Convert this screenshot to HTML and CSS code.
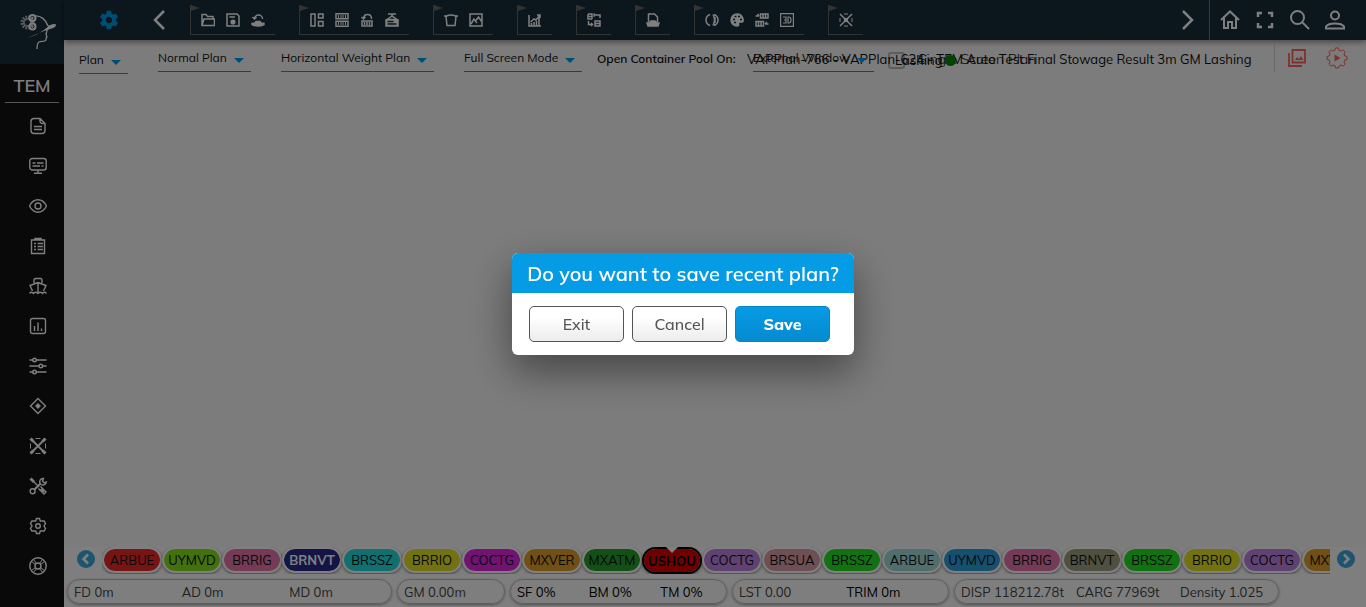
FILE: index.html
```html
<!DOCTYPE html>
<html lang="en">
<head>
<meta charset="utf-8">
<meta name="viewport" content="width=device-width, initial-scale=1">
<title>Stowage plan</title>
<link rel="stylesheet" href="styles.css">
</head>
<body>
<div class="app">
  <aside class="sidebar">
    <a class="logo" href="#" aria-label="Home">
      <svg viewBox="0 0 40 40" width="40" height="40" fill="none" stroke="currentColor">
        <circle cx="13.500" cy="12.500" r="5.500" stroke-width="3" stroke-dasharray="1.800 1.100" opacity=".65"/>
        <circle cx="13.500" cy="12.500" r="3.500" stroke-width="2" opacity=".55"/>
        <circle cx="18.500" cy="8" r="3" stroke-width="2"/>
        <circle cx="18.500" cy="8" r=".8"/>
        <circle cx="18.500" cy="16.500" r="3" stroke-width="2"/>
        <circle cx="18.500" cy="16.500" r=".8"/>
        <path d="M20 6c7-1 12 4 14 10" stroke-width="1.300"/>
        <path d="M13 28c8-2 16-7 22-12 2-2 7-3 7-1 0 3-7 4-12 6-6 2-11 5-17 7z" fill="currentColor" stroke="none"/>
        <path d="M33 21l-1 3 1 3-1 1v2c-1 2-4 1-7 2-2 1-2 4-2 7M35 15c0 3-1 5-3 6" stroke-width="1.300"/>
      </svg>
    </a>
    <div class="brand">TEM</div>
    <nav class="side-nav" aria-label="Modules">
      <a href="#" aria-label="Documents"><svg class="icon" viewBox="0 0 18 18"><path d="M11 1.500H5a3 3 0 0 0-3 3v9a3 3 0 0 0 3 3h8a3 3 0 0 0 3-3v-7zM11 1.500V4a2.500 2.500 0 0 0 2.500 2.500H16M5 9.500h8M5 12.500h8"/></svg></a>
      <a href="#" aria-label="Monitor"><svg class="icon" viewBox="0 0 18 18"><rect x=".8" y="1.500" width="16.400" height="11.500" rx="2.500"/><path d="M3.500 6H6.500M8 6h6.500M3.500 9H11M12.500 9h2M9 13v3M5 16.300h8"/></svg></a>
      <a href="#" aria-label="View"><svg class="icon" viewBox="0 0 18 18"><path d="M.5 9C2.500 5 5.800 2.800 9 2.800S15.500 5 17.500 9C15.500 13 12.200 15.200 9 15.200S2.500 13 .5 9z"/><circle cx="9" cy="9" r="3"/></svg></a>
      <a href="#" aria-label="Checklist"><svg class="icon" viewBox="0 0 18 18"><path d="M2.500 3h13v13.500h-13zM6 3V1.500h6V3M5 6.500h2M8.500 6.500H14M5 9.500h2M8.500 9.500H14M5 12.500h2M8.500 12.500H14"/></svg></a>
      <a href="#" aria-label="Vessel"><svg class="icon" viewBox="0 0 18 18"><path d="M5 6V3.500Q5 1.500 6.500 1.500h5Q13 1.500 13 3.500V6M3.500 14L1 8.500Q4 7.500 9 5.500q5 2 8 3L14.500 14M9 5.500V15M.5 16.500q2-2.500 4 0 2-2.500 4.500 0 2.500-2.500 4.500 0 2-2.500 4 0"/></svg></a>
      <a href="#" aria-label="Statistics"><svg class="icon" viewBox="0 0 18 18"><rect x="1.500" y="1.500" width="15" height="15" rx="2"/><path d="M5.500 9v5M9 5.500V14M12.500 11.500V14"/></svg></a>
      <a href="#" aria-label="Filters"><svg class="icon" viewBox="0 0 18 18"><path d="M.5 3h4M7 3h10.500M.5 9H10M13.500 9h4M.5 15h4M7 15h10.500"/><circle cx="5.500" cy="3" r="1.800"/><circle cx="11.800" cy="9" r="1.800"/><circle cx="5.500" cy="15" r="1.800"/></svg></a>
      <a href="#" aria-label="Dangerous goods"><svg class="icon" viewBox="0 0 18 18"><path d="M9 1.500L16.500 9 9 16.500 1.500 9z"/><path class="solid" d="M9 7L11 9 9 11 7 9z"/></svg></a>
      <a href="#" aria-label="Lashing"><svg class="icon" viewBox="0 0 18 18"><path stroke-width="1.800" d="M2 2l14 14M16 2L2 16"/><path stroke-width="1" d="M6.500 1.500h5M6.500 16.500h5M1.500 6.500v5M16.500 6.500v5"/><path stroke-width="3" d="M1.500 1.500L4.500 4.500M16.500 1.500L13.500 4.500M1.500 16.500L4.500 13.500M16.500 16.500L13.500 13.500"/></svg></a>
      <a href="#" aria-label="Tools"><svg class="icon" viewBox="0 0 18 18"><path stroke-width="2.800" d="M1.500 1.500L5 5"/><path d="M4 4l6 6M11.500 9.500l5.500 5.500-2 2-5.500-5.500M12 12l3 3"/><path stroke-width="2" d="M5.500 12.500l6-6"/><path d="M14.500 1.500a3.300 3.300 0 1 0 2.800 3.500l-2.300.8-1.500-1.500z"/><circle cx="3.600" cy="14.300" r="2.500"/></svg></a>
      <a href="#" aria-label="Settings"><svg class="icon" viewBox="0 0 18 18"><path d="M7.500 1.500h3L11.300 4l2.200 0 1.600 0L16.500 6.500 15 9l1.500 2.500-1.400 2.500h-3.800l-.8 2.500h-3L6.700 14H2.900l-1.400-2.500L3 9 1.500 6.500 2.900 4h3.800z"/><circle cx="9" cy="9" r="2.300"/></svg></a>
      <a href="#" aria-label="Help"><svg class="icon" viewBox="0 0 18 18"><circle cx="9" cy="9" r="8.200"/><circle cx="9" cy="9" r="3"/><path d="M2.500 4.500l4 3M4.500 2.500l3 4M13.500 2.500l-3 4M15.500 4.500l-4 3M2.500 13.500l4-3M4.500 15.500l3-4M13.500 15.500l-3-4M15.500 13.500l-4-3" stroke-width="1"/></svg></a>
    </nav>
  </aside>

  <div class="workspace">
    <header class="topbar">
      <button class="bar-btn settings" type="button" aria-label="Settings"><svg class="fill" width="24" height="24" viewBox="0 0 24 24"><path d="M19.430 12.980c.04-.32.070-.64.070-.98s-.03-.66-.07-.98l2.110-1.650c.19-.15.240-.42.120-.64l-2-3.460c-.12-.22-.39-.3-.61-.22l-2.490 1c-.52-.4-1.080-.73-1.690-.98l-.38-2.650C14.460 2.180 14.250 2 14 2h-4c-.25 0-.46.180-.49.420l-.38 2.650c-.61.250-1.170.59-1.690.98l-2.490-1c-.23-.09-.49 0-.61.220l-2 3.460c-.13.220-.07.490.12.640l2.110 1.650c-.04.320-.07.650-.07.980s.03.660.070.980l-2.110 1.650c-.19.150-.24.420-.12.640l2 3.460c.12.220.39.300.61.220l2.490-1c.52.400 1.080.730 1.690.980l.38 2.650c.03.240.24.420.49.420h4c.25 0 .46-.18.490-.42l.38-2.650c.61-.25 1.170-.59 1.690-.98l2.490 1c.23.090.49 0 .61-.22l2-3.460c.12-.22.070-.49-.12-.64l-2.110-1.650zM12 15.500c-1.930 0-3.500-1.570-3.500-3.500s1.570-3.500 3.500-3.500 3.500 1.570 3.500 3.500-1.570 3.500-3.500 3.500z"/></svg></button>
      <button class="bar-btn prev" type="button" aria-label="Previous tools"><svg class="line" width="14" height="22" viewBox="0 0 14 22"><path d="M12 2L3 11l9 9"/></svg></button>
      <div class="tool-groups">
        <div class="group">
          <button type="button" aria-label="Open"><svg class="tool" viewBox="0 0 14 14"><path d="M1 12.500v-11h4l1.500 2H12v2M1 12.500L3 6h10.500v6.500z"/></svg></button>
          <button type="button" aria-label="Save"><svg class="tool" viewBox="0 0 14 14"><path d="M1 1h10l2 2v10H1zM3.500 4H9"/><circle class="solid" cx="7" cy="9" r="1.800"/></svg></button>
          <button type="button" aria-label="Restore"><svg class="tool" viewBox="0 0 14 14"><path d="M3.500 6a4 4 0 1 1 8 0M1.500 4l2 2 2-2"/><path class="solid" d="M1 10.500l3-.5 1-1.500h4l1 1.500 3 .5v1q-6 3-12 0z"/></svg></button>
        </div>
        <div class="group">
          <button type="button" aria-label="Layout"><svg class="tool" viewBox="0 0 14 14"><path d="M1 1h4v12H1zM8.500 1H13v4H8.500zM8.500 8.500H13V13H8.500z"/></svg></button>
          <button type="button" aria-label="Bays"><svg class="tool" viewBox="0 0 14 14"><path d="M1 0.800h12v5H1zM1 8.300h12v5H1z"/><path stroke-width="1" d="M3.500 2v3M6 2v3M8 2v3M10.500 2v3M3.500 9v3M6 9v3M8 9v3M10.500 9v3"/></svg></button>
          <button type="button" aria-label="Reload containers"><svg class="tool" viewBox="0 0 14 14"><path d="M2 8h10v5H2zM4.500 9v3M7 9v3M9.500 9v3M3.500 6q0-4.500 4-4.500t4 4.500M1.500 4l2 2 2-2"/></svg></button>
          <button type="button" aria-label="Crane"><svg class="tool" viewBox="0 0 14 14"><path d="M3 1h8M7 1v2M7 3L2 6.500h10z"/><path class="solid" d="M1 7h12v6H1z"/><path class="cut" d="M2.500 8.500h6M2.500 11h9"/></svg></button>
        </div>
        <div class="group">
          <button type="button" aria-label="Tank"><svg class="tool" viewBox="0 0 14 14"><path d="M0 3h2.500Q7 1 11.500 3H14M2 3.500L3 12.500h8l1-9"/></svg></button>
          <button type="button" aria-label="Graph"><svg class="tool" viewBox="0 0 14 14"><path d="M1 1h12v12H1zM2 11l3-5 3 4M6.500 8l3-4L13 9"/></svg></button>
        </div>
        <div class="group">
          <button type="button" aria-label="Chart"><svg class="tool" viewBox="0 0 14 14"><path d="M1 2v11h12M3.500 13v-3M6 13V9M8.500 13V8M11 13V5M2.500 9L6 6l2 1 4-5M9 2h3v3"/></svg></button>
        </div>
        <div class="group">
          <button type="button" aria-label="Swap"><svg class="tool" viewBox="0 0 14 14"><path d="M1 1v5h4M1 3.500h4M1 1h4v5M8 2h5v3M6.500 3.500L8 2 6.500.5M8 8h5v5H8zM8 10.500h5M5.500 11.500H1.500V8M4 10l1.500 1.500L4 13"/></svg></button>
        </div>
        <div class="group">
          <button type="button" aria-label="Report"><svg class="tool" viewBox="0 0 14 14"><path d="M2.500 9V1h6l3 3v5"/><path class="solid" d="M1 10h2l2-2h4L11 10h2l-1 3H2z"/></svg></button>
        </div>
        <div class="group">
          <button type="button" aria-label="Contrast"><svg class="tool" viewBox="0 0 14 14"><path d="M5 1.500Q1 3 1 7t4 5.500"/><path d="M9 1.500q4 1.500 4 5.500t-4 5.500M8 1.500q3 5.500 0 11M10 4v6"/></svg></button>
          <button type="button" aria-label="Palette"><svg class="tool" viewBox="0 0 14 14"><path class="solid" d="M7 1a6 6 0 1 0 0 12q2 0 1.500-2T10 9h2q1.500 0 1-3Q12 1 7 1z"/><path class="cut" d="M3 6.500h2M4.500 3.500h2M8 3.500h2M10 6.500h2M4 9.500h2"/></svg></button>
          <button type="button" aria-label="Move containers"><svg class="tool" viewBox="0 0 14 14"><path d="M5.500 1H13v4H5.500zM8 1v4M10.500 1v4M1 8.500h7.500v4.500H1zM3.500 8.500V13M6 8.500V13M.5 3h3.500M2.500 1L4 3M13.500 11H10M12 9l-2 2"/></svg></button>
          <button type="button" aria-label="3D view"><svg class="tool fine" viewBox="0 0 14 14"><path d="M.6.600h12.800v12.800H.6zM3 4h3v6H3M4 7h2M8 4h1q2 0 2 3t-2 3H8z"/></svg></button>
        </div>
        <div class="group">
          <button type="button" aria-label="Lashing view"><svg class="tool" viewBox="0 0 14 14"><path d="M1 1l12 12M13 1L1 13"/><path stroke-width="1" d="M5 1h4M5 13h4M1 5v4M13 5v4"/><circle class="solid" cx="7" cy="7" r="1.500"/></svg></button>
        </div>
      </div>
      <button class="bar-btn next" type="button" aria-label="Next tools"><svg class="line" width="14" height="22" viewBox="0 0 14 22"><path d="M2 2l9 9-9 9"/></svg></button>
      <div class="user-tools">
        <button class="bar-btn" type="button" aria-label="Home"><svg class="line thin" width="22" height="22" viewBox="0 0 22 22"><path d="M2 11l9-8.500L20 11M5 9v10h4v-6h4v6h4V9"/></svg></button>
        <button class="bar-btn" type="button" aria-label="Full screen"><svg class="line" width="18" height="18" viewBox="0 0 18 18"><path d="M2 6V2h4M12 2h4v4M16 12v4h-4M6 16H2v-4"/></svg></button>
        <button class="bar-btn" type="button" aria-label="Search"><svg class="line thin" width="22" height="22" viewBox="0 0 22 22"><circle cx="8.500" cy="8.500" r="6.500"/><path d="M13.500 13.500L20 20"/></svg></button>
        <button class="bar-btn" type="button" aria-label="Account"><svg class="line thin" width="22" height="22" viewBox="0 0 22 22"><circle cx="11" cy="6.500" r="4"/><path d="M2 19.500v-2q2-3 9-3t9 3v2z"/></svg></button>
      </div>
    </header>

    <div class="subbar">
      <label class="pick plan"><select aria-label="Plan"><option>Plan</option></select></label>
      <label class="pick normal"><select aria-label="Plan type"><option>Normal Plan</option></select></label>
      <label class="pick weight"><select aria-label="Plan view"><option>Horizontal Weight Plan</option></select></label>
      <label class="pick mode"><select aria-label="Screen mode"><option>Full Screen Mode</option></select></label>
      <span class="pool">Open Container Pool On:</span>
      <div class="overlap">
        <div class="view-options">
          <label class="pick window"><select aria-label="Window"><option>External Window</option></select></label>
          <label class="check"><input type="checkbox"><span>Lashing</span></label>
          <span class="screen-plan">Single Screen Plan</span>
        </div>
        <h1 class="plan-title">VAPPlan-766 - VAPPlan-624 - TEM Auto Test Final Stowage Result 3m GM Lashing</h1>
        <span class="dot"></span>
      </div>
      <div class="actions">
        <button class="bar-btn" type="button" aria-label="Gallery"><svg width="18" height="18" viewBox="0 0 18 18"><path d="M4.500 1H17v12.500H4.500zM1 4v13h13"/><path class="solid" d="M7 11l2-3 2 2 2-3 2.500 4z"/></svg></button>
        <button class="bar-btn" type="button" aria-label="Run"><svg width="22" height="22" viewBox="0 0 22 22"><path stroke-width="1" d="M9.500 1h3l.6 2.200 2 .8 2-1.200L19.200 5 18 7l.8 2 2.200.5v3l-2.200.5-.8 2 1.200 2-2.100 2.200-2-1.200-2 .8-.6 2.200h-3L9 18.800 7 18l-2 1.200L2.800 17 4 15l-.8-2-2.200-.5v-3L3.200 9 4 7 2.800 5 5 2.800 7 4l2-.8z"/><path class="solid" d="M8.500 7.500l6 3.500-6 3.500z"/></svg></button>
      </div>
    </div>

    <main class="canvas"></main>

    <footer class="footer">
      <div class="ports">
        <button class="round" type="button" aria-label="Previous ports"><svg viewBox="0 0 18 18" width="18" height="18"><circle cx="9" cy="9" r="9"/><path d="M11 4.500L6.500 9l4.500 4.500"/></svg></button>
        <div class="port-list">
          <button type="button" class="port red">ARBUE</button>
          <button type="button" class="port lime">UYMVD</button>
          <button type="button" class="port pink">BRRIG</button>
          <button type="button" class="port navy">BRNVT</button>
          <button type="button" class="port cyan">BRSSZ</button>
          <button type="button" class="port yellow">BRRIO</button>
          <button type="button" class="port magenta">COCTG</button>
          <button type="button" class="port orange">MXVER</button>
          <button type="button" class="port forest">MXATM</button>
          <button type="button" class="port current">USHOU</button>
          <button type="button" class="port violet">COCTG</button>
          <button type="button" class="port rose">BRSUA</button>
          <button type="button" class="port green">BRSSZ</button>
          <button type="button" class="port aqua">ARBUE</button>
          <button type="button" class="port blue">UYMVD</button>
          <button type="button" class="port pink">BRRIG</button>
          <button type="button" class="port olive">BRNVT</button>
          <button type="button" class="port green">BRSSZ</button>
          <button type="button" class="port yellow">BRRIO</button>
          <button type="button" class="port violet">COCTG</button>
          <button type="button" class="port orange">MXVER</button>
        </div>
        <button class="round" type="button" aria-label="Next ports"><svg viewBox="0 0 18 18" width="18" height="18"><circle cx="9" cy="9" r="9"/><path d="M7 4.500L11.500 9 7 13.500"/></svg></button>
      </div>
      <div class="stats">
        <div class="stat three"><span>FD 0m</span><span>AD 0m</span><span>MD 0m</span></div>
        <div class="stat"><span>GM 0.00m</span></div>
        <div class="stat three strong"><span>SF 0%</span><span>BM 0%</span><span>TM 0%</span></div>
        <div class="stat two"><span>LST 0.00</span><span class="dark">TRIM 0m</span></div>
        <div class="stat three load"><span>DISP 118212.78t</span><span>CARG 77969t</span><span>Density 1.025</span></div>
      </div>
    </footer>
  </div>
</div>

<div class="backdrop">
  <div class="dialog" role="dialog" aria-modal="true" aria-labelledby="dialog-title">
    <h2 id="dialog-title">Do you want to save recent plan?</h2>
    <div class="dialog-actions">
      <button type="button">Exit</button>
      <button type="button">Cancel</button>
      <button type="button" class="primary">Save</button>
    </div>
  </div>
</div>
</body>
</html>
```
FILE: styles.css
```css
* { box-sizing: border-box; }
body {
  margin: 0;
  overflow: hidden;
  font-family: Mulish, Muli, Lato, "Open Sans", sans-serif;
  font-size: 13px;
  font-weight: 400;
  color: #111;
  background: #f8f8f8;
}
button, select { font: inherit; color: inherit; }
button { padding: 0; border: 0; background: none; cursor: pointer; }
svg { display: block; }
.solid { fill: currentColor; }

.app { display: flex; min-height: 100vh; }

/* Sidebar */
.sidebar { flex: 0 0 64px; background: #131313; color: #fff; }
.logo {
  display: flex;
  height: 64px;
  padding: 10px 0 0 14px;
  background: #182d3b;
  color: #fff;
}
.logo svg { overflow: visible; }
.brand {
  margin: 0 5px;
  height: 39px;
  border-bottom: 1px solid #aaa;
  font-size: 18px;
  font-weight: 600;
  line-height: 44px;
  text-align: center;
}
.side-nav { padding-top: 3px; }
.side-nav a {
  display: flex;
  align-items: center;
  justify-content: center;
  height: 40px;
  padding-left: 12px;
  color: #fff;
}
.icon { width: 18px; height: 18px; fill: none; stroke: currentColor; stroke-width: 1.4; }
.icon .solid { fill: currentColor; }

/* Top bar */
.workspace { display: flex; flex: 1; flex-direction: column; min-width: 0; }
.topbar {
  display: flex;
  height: 40px;
  background: #182d3b;
  color: #fff;
  box-shadow: 0 2px 6px rgba(0, 0, 0, .45);
}
.bar-btn { display: flex; align-items: center; justify-content: center; width: 35px; }
.settings { width: 90px; color: #009be6; }
.settings svg { width: 22px; height: 22px; fill: currentColor; }
.prev { width: 10px; margin-right: 26px; }
.line { flex: none; fill: none; stroke: currentColor; stroke-width: 2.5; }
.thin { stroke-width: 2; }
.tool-groups { display: flex; flex: 1; gap: 24px; padding-top: 5px; }
.group {
  position: relative;
  display: flex;
  height: 30px;
  padding: 0 5px 0 4px;
  border: solid #666;
  border-width: 0 0 1px 1px;
}
.group::before {
  content: "";
  position: absolute;
  top: 0;
  left: 0;
  border: solid transparent;
  border-width: 3px 0 3px 9px;
  border-left-color: #666;
}
.group button { display: flex; align-items: center; justify-content: center; width: 25px; }
.tool { width: 14px; height: 14px; fill: none; stroke: currentColor; stroke-width: 1.5; }
.fine { stroke-width: 1.2; }
.tool .solid { fill: currentColor; }
.tool .cut { stroke: #182d3b; }
.next { width: 42px; }
.user-tools { display: flex; padding: 0 14px 0 2px; border-left: 1px solid #65727b; }

/* Plan options */
.subbar { display: flex; align-items: flex-start; height: 34px; padding: 8px 10px 0 15px; white-space: nowrap; }
.subbar > * { flex: none; }
.pick { position: relative; display: block; border-bottom: 1px solid #777; }
.pick::after {
  content: "";
  position: absolute;
  right: 7px;
  bottom: 8px;
  border: solid transparent;
  border-width: 5px 5px 0;
  border-top-color: #009be6;
}
.pick select {
  display: block;
  width: 100%;
  height: 23px;
  padding: 0 0 4px;
  border: 0;
  background: none;
  appearance: none;
  font-size: 12px;
}
.plan { width: 49px; margin-right: 30px; padding-top: 2px; }
.normal { width: 93px; margin-right: 30px; }
.weight { width: 153px; margin-right: 30px; }
.mode { width: 118px; margin-right: 15px; }
.pool { width: 150px; line-height: 22px; font-weight: 600; font-size: 12px; }
.subbar .overlap { position: relative; display: grid; flex: 1; min-width: 0; }
.view-options, .plan-title { grid-area: 1 / 1; }
.view-options { display: flex; padding-left: 6px; }
.window { width: 121px; margin-right: 14px; }
.check { display: flex; align-items: center; width: 30px; height: 24px; }
.check input { flex: none; appearance: none; width: 17px; height: 17px; margin: 0 -10px 0 0; border: 2px solid #bbb; border-radius: 3px; }
.screen-plan { font-size: 14px; font-weight: 300; line-height: 22px; }
.plan-title { margin: 0; font-size: 13px; font-weight: 400; line-height: 22px; }
.dot { position: absolute; left: 198px; top: 7px; width: 11px; height: 11px; border-radius: 50%; background: #008800; }
.actions { display: flex; height: 28px; margin-top: -4px; border-left: 1px solid #ccc; color: #ff6258; }
.actions .bar-btn { width: 38px; }
.actions .bar-btn:first-child { width: 43px; }
.actions svg { fill: none; stroke: currentColor; stroke-width: 1.8; }
.actions .solid { fill: currentColor; stroke: none; }

.canvas { flex: 1; }

/* Ports and ship status */
.footer { padding: 0 0 3px 3px; background: #fdfdfd; }
.ports { display: flex; align-items: center; height: 27px; padding: 0 11px 0 10px; }
.round { flex: none; padding-bottom: 3px; }
.round circle { fill: #3fa9dd; }
.round path { fill: none; stroke: #fff; stroke-width: 2.5; }
.port-list { display: flex; flex: 1; min-width: 0; margin: 0 7px; overflow: hidden; }
.port {
  position: relative;
  flex: none;
  width: 60px;
  height: 26px;
  padding: 0;
  border: 2px solid #fff;
  border-radius: 14px;
  box-shadow: 0 1px 3px rgba(0, 0, 0, .5);
  background-clip: padding-box;
  text-align: center;
}
.red { background-color: #ef2a2a; }
.lime { background-color: #86e21b; }
.pink { background-color: #e875ac; }
.navy { background-color: #29298c; color: #fff; font-weight: 700; }
.cyan { background-color: #25dede; }
.yellow { background-color: #e4e424; }
.magenta { background-color: #e424e4; }
.orange { background-color: #e0a02a; }
.forest { background-color: #24a02c; }
.violet { background-color: #c085e4; }
.rose { background-color: #dca0a8; }
.green { background-color: #25e425; }
.aqua { background-color: #a0dcdc; }
.blue { background-color: #2aa0dc; }
.olive { background-color: #a0a080; }
.current { height: 27px; padding: 1px 0 0; border-color: #000; background-color: #e00000; color: #000; font-weight: 700; }
.current::before {
  content: "";
  position: absolute;
  top: -2px;
  left: 22px;
  border: solid transparent;
  border-width: 6px 6px 0;
  border-top-color: #fff;
}
.stats {
  display: grid;
  grid-template-columns: 325fr 108fr 217fr 217fr 325fr;
  gap: 5px;
  padding: 5px 87px 0 0;
  color: #444;
}
.stat {
  display: grid;
  height: 25px;
  border: 1px solid #bbb;
  border-radius: 13px;
  box-shadow: 0 1px 3px rgba(0, 0, 0, .35);
  line-height: 24px;
  white-space: nowrap;
}
.stat span { padding-left: 6px; }
.three { grid-template-columns: repeat(3, 1fr); }
.two { grid-template-columns: repeat(2, 1fr); }
.load span { padding-right: 6px; }
.strong, .dark { color: #000; }

/* Save dialog */
.backdrop {
  position: fixed;
  inset: 0;
  display: flex;
  align-items: center;
  justify-content: center;
  background: rgba(0, 0, 0, .5);
}
.dialog {
  width: 342px;
  overflow: hidden;
  border-radius: 6px;
  background: #fff;
  box-shadow: 0 16px 42px rgba(0, 0, 0, .45);
}
.dialog h2 {
  height: 40px;
  margin: 0;
  background: #059be5;
  color: #fff;
  font-size: 20px;
  font-weight: 600;
  line-height: 42px;
  text-align: center;
}
.dialog-actions { display: flex; gap: 8px; padding: 13px 17px; }
.dialog-actions button {
  width: 95px;
  height: 36px;
  border: 1px solid #555;
  border-radius: 5px;
  background: linear-gradient(#fff 30%, #ececec);
  color: #555;
  font-size: 16px;
  font-weight: 500;
}
.dialog-actions .primary {
  border-color: #0487c8;
  background: linear-gradient(#059be5, #058bd0);
  color: #fff;
  font-weight: 800;
}
```
